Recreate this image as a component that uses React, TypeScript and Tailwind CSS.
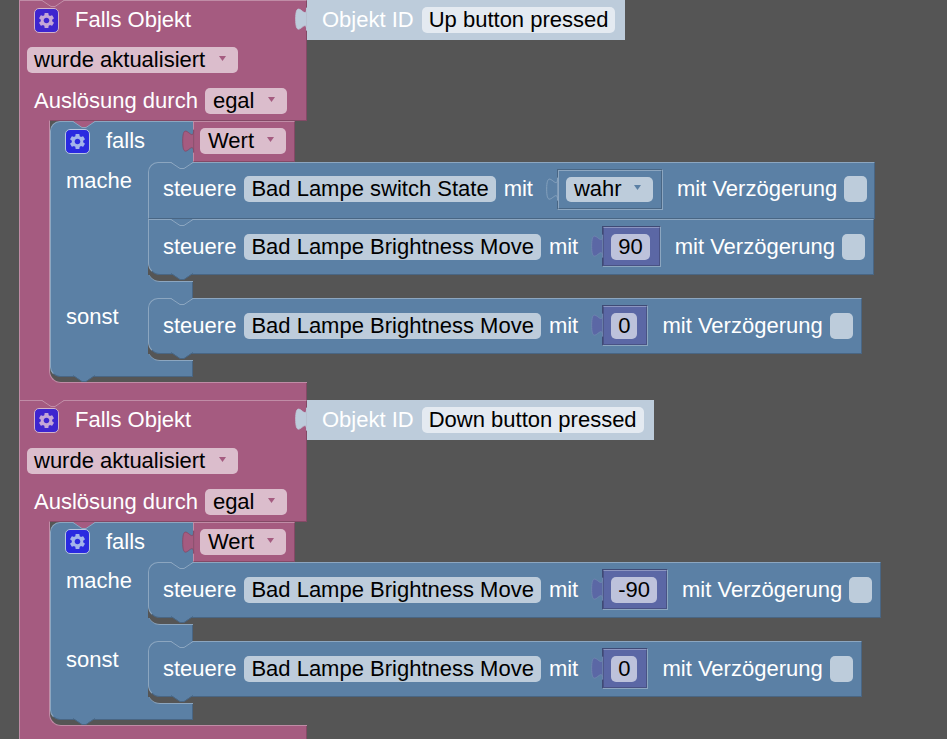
import { MdSettings } from "react-icons/md";

const PINK = "#a55b80";
const BLUE = "#5b80a5";

type Tone = "pink" | "blue" | "idle" | "num";

const tabColors: Record<Tone, { fill: string; stroke: string }> = {
  pink: { fill: "#a55b80", stroke: "#844966" },
  blue: { fill: "#5b80a5", stroke: "#8ca6c0" },
  idle: { fill: "#bdccdb", stroke: "#bdccdb" },
  num: { fill: "#5b67a5", stroke: "#7288b0" },
};

// value connector on the left side of a block
function Tab({ tone }: { tone: Tone }) {
  const c = tabColors[tone];
  return (
    <svg
      width="13"
      height="25"
      viewBox="-8.5 -0.5 9.5 16.5"
      preserveAspectRatio="none"
      className="absolute left-[-12px] top-[7px]"
    >
      <path
        d="M0 0 c0 10 -8 -8 -8 7.5 s8 -2.5 8 7.5 z"
        fill={c.fill}
        stroke={c.stroke}
        strokeWidth="0.6"
      />
    </svg>
  );
}

// the dent at the top edge of a statement block
function TopNotch({ fill, stroke, left }: { fill: string; stroke: string; left: string }) {
  return (
    <svg width="24" height="8" viewBox="0 0 24 8" className={`absolute top-[-1px] ${left}`}>
      <path d="M1 0 L10 6.5 H14 L23 0 Z" fill={fill} />
      <path d="M1 0.5 L10 6.5 H14 L23 0.5" fill="none" stroke={stroke} />
    </svg>
  );
}

// the bump at the bottom edge of a statement block
function BottomNotch({ left }: { left: string }) {
  return (
    <svg width="24" height="8" viewBox="0 0 24 8" className={`absolute top-full mt-[-1px] ${left}`}>
      <path d="M1 0 L10 6.5 H14 L23 0 Z" fill={BLUE} />
      <path d="M1 0.5 L10 6.5 H14 L23 0.5" fill="none" stroke="#496684" />
    </svg>
  );
}

function Arrow({ color }: { color: string }) {
  return (
    <svg width="7" height="5" viewBox="0 0 7 5" className="ml-[11px] mr-[2px] mb-[3px]">
      <path d="M0 0 H7 L3.5 5 Z" fill={color} />
    </svg>
  );
}

function Gear({ bg, color }: { bg: string; color: string }) {
  return (
    <div className={`flex h-[25px] w-[25px] items-center justify-center rounded-[5px] border ${bg}`}>
      <MdSettings className={color} size={19} />
    </div>
  );
}

function Dropdown({ label, className }: { label: string; className: string }) {
  return (
    <div className={`flex h-[26px] items-center justify-between rounded-[5px] bg-[#dbbdcc] pr-[10px] text-black ${className}`}>
      <span>{label}</span>
      <Arrow color={PINK} />
    </div>
  );
}

function Field({ label, bg = "bg-[#bdccdb]" }: { label: string; bg?: string }) {
  return (
    <div className={`flex h-[26px] items-center rounded-[5px] px-[7px] text-black ${bg}`}>{label}</div>
  );
}

function BoolValue() {
  return (
    <div className="relative ml-[24px] border border-t-[#496684] border-l-[#496684] border-r-[#8ca6c0] border-b-[#8ca6c0]">
      <Tab tone="blue" />
      <div className="flex h-[39px] w-[104px] items-center border border-t-[#8ca6c0] border-l-[#8ca6c0] border-r-[#496684] border-b-[#496684] bg-[#5b80a5] pl-[7px]">
        <div className="flex h-[25px] w-[87px] items-center justify-between rounded-[5px] bg-[#bdccdb] pl-[8px] pr-[10px] text-black">
          <span>wahr</span>
          <Arrow color="#5b80a5" />
        </div>
      </div>
    </div>
  );
}

function NumValue({ value }: { value: string }) {
  return (
    <div className="relative ml-[24px] border border-t-[#3f4a75] border-l-[#3f4a75] border-r-[#8ca6c0] border-b-[#8ca6c0]">
      <Tab tone="num" />
      <div className="flex h-[39px] items-center border border-t-[#8c95c0] border-l-[#495284] border-r-[#495284] border-b-[#495284] bg-[#5b67a5] pl-[7px] pr-[9px]">
        <Field label={value} bg="bg-[#bdc2db]" />
      </div>
    </div>
  );
}

interface StatementProps {
  name: string;
  value: string;
  first?: boolean;
  last?: boolean;
  height: string;
}

function Statement({ name, value, first, last, height }: StatementProps) {
  return (
    <div
      className={`relative flex items-center border border-t-[#8ca6c0] border-l-[#8ca6c0] border-r-[#496684] border-b-[#496684] bg-[#5b80a5] pl-[14px] text-white ${value === "wahr" ? "pr-[7px]" : "pr-[8px]"} ${height} ${first ? "rounded-tl-[10px]" : ""} ${last ? "rounded-bl-[12px]" : ""}`}
    >
      <TopNotch fill={BLUE} stroke="#8ca6c0" left="left-[21px]" />
      <span>steuere</span>
      <div className="ml-[8px]">
        <Field label={name} />
      </div>
      <span className="ml-[8px]">mit</span>
      {value === "wahr" ? <BoolValue /> : <NumValue value={value} />}
      <span className="ml-[14px]">mit Verzögerung</span>
      <div className="ml-[7px] h-[26px] w-[23px] rounded-[5px] bg-[#bdccdb]" />
      {last && <BottomNotch left="left-[21px]" />}
    </div>
  );
}

interface BranchProps {
  label: string;
  rows: { name: string; value: string }[];
}

function Branch({ label, rows }: BranchProps) {
  return (
    <div className="flex w-[143px] bg-[#5b80a5]">
      <div className="w-[98px] shrink-0 border-l border-[#8ca6c0] pl-[15px] pt-[8px] text-white">{label}</div>
      {/* narrow on purpose: only the gap under the stack gets an edge, the rows overflow to the right */}
      <div className="w-[45px] shrink-0 rounded-bl-[12px] border-b border-[#8ca6c0] bg-[#555555] pb-[6px]">
        <div className="flex w-max flex-col items-start bg-[linear-gradient(#5b80a5_50%,#555555_50%)]">
          {rows.map((r, i) => (
            <Statement
              key={i}
              name={r.name}
              value={r.value}
              first={i === 0}
              last={i === rows.length - 1}
              height={rows.length > 1 && i === 0 ? "h-[57px] pb-[3px]" : "h-[56px] pb-[1px]"}
            />
          ))}
        </div>
      </div>
    </div>
  );
}

interface HatProps {
  objectId: string;
  shifted?: boolean;
  thenRows: { name: string; value: string }[];
  elseRows: { name: string; value: string }[];
}

function HatBlock({ objectId, shifted, thenRows, elseRows }: HatProps) {
  return (
    <div className="w-max">
      <div className="flex items-start">
        {/* Falls Objekt */}
        <div className={`relative w-[288px] border-l border-r border-t border-t-[#c08ca6] border-l-[#c08ca6] border-r-[#844966] bg-[#a55b80] text-white ${shifted ? "h-[121px]" : "h-[120px]"}`}>
          <TopNotch fill={PINK} stroke="#c08ca6" left="left-[21px]" />
          <div className="flex h-[38px] items-center pl-[14px]">
            <Gear bg="border-[#d3b3c8] bg-[#3d25cf]" color="text-[#c3a6d6]" />
            <span className="ml-[16px]">Falls Objekt</span>
          </div>
          <div className={`pl-[7px] ${shifted ? "mt-[9px]" : "mt-[8px]"}`}>
            <Dropdown label="wurde aktualisiert" className="w-[211px] pl-[7px]" />
          </div>
          <div className="mt-[15px] flex items-center pl-[14px]">
            <span>Auslösung durch</span>
            <div className="ml-[7px]">
              <Dropdown label="egal" className="w-[82px] pl-[8px]" />
            </div>
          </div>
        </div>
        {/* Objekt ID */}
        <div className="relative flex h-[40px] items-center bg-[#bdccdb] pb-[1px] pl-[15px] pr-[10px] text-white">
          <Tab tone="idle" />
          <span>Objekt ID</span>
          <div className="ml-[8px]">
            <Field label={objectId} bg="bg-[#e4eaf1]" />
          </div>
        </div>
      </div>

      <div className="flex w-[288px] bg-[#a55b80]">
        <div className="w-[30px] shrink-0 border-l border-[#c08ca6]" />
        <div className="w-[258px] shrink-0 rounded-bl-[12px] border-b border-l border-t border-b-[#c08ca6] border-l-[#c08ca6] border-t-[#844966] bg-[#555555] pb-[5px]">
          <div className="w-max">
            {/* falls + Wert */}
            <div className="flex items-start">
              <div className={`relative flex w-[143px] items-center rounded-tl-[10px] border-l border-t border-[#8ca6c0] bg-[#5b80a5] pb-[2px] pl-[14px] text-white ${shifted ? "h-[40px]" : "h-[41px]"}`}>
                <TopNotch fill={PINK} stroke="#8ca6c0" left="left-[21px]" />
                <Gear bg="border-[#b7c6e0] bg-[#2a2ae0]" color="text-[#a3b4ea]" />
                <span className="ml-[16px]">falls</span>
              </div>
              <div className={`relative flex w-[102px] items-center border border-t-[#c08ca6] border-l-[#c08ca6] border-r-[#844966] border-b-[#844966] bg-[#a55b80] pl-[6px] ${shifted ? "h-[40px] pb-[1px]" : "h-[41px] pb-[2px]"}`}>
                <Tab tone="pink" />
                <Dropdown label="Wert" className="w-[86px] pl-[8px]" />
              </div>
            </div>
            <Branch label="mache" rows={thenRows} />
            <div className="h-[16px] w-[143px] border-l border-r border-l-[#8ca6c0] border-r-[#496684] bg-[#5b80a5]" />
            <Branch label="sonst" rows={elseRows} />
            <div className="relative h-[16px] w-[143px] rounded-bl-[10px] border-b border-l border-r border-b-[#496684] border-l-[#8ca6c0] border-r-[#496684] bg-[#5b80a5]">
              <BottomNotch left="left-[21px]" />
            </div>
          </div>
        </div>
      </div>
      <div className="h-[17px] w-[288px] border-l border-r border-l-[#c08ca6] border-r-[#844966] bg-[#a55b80]" />
    </div>
  );
}

const MOVE = "Bad Lampe Brightness Move";

export default function App() {
  return (
    <div
      className="h-[739px] overflow-hidden bg-[#555555] pl-[19px] text-[22px] leading-none"
      style={{ fontFamily: '"Liberation Sans", Arial, sans-serif' }}
    >
      <HatBlock
        objectId="Up button pressed"
        thenRows={[
          { name: "Bad Lampe switch State", value: "wahr" },
          { name: MOVE, value: "90" },
        ]}
        elseRows={[{ name: MOVE, value: "0" }]}
      />
      <HatBlock
        objectId="Down button pressed"
        shifted
        thenRows={[{ name: MOVE, value: "-90" }]}
        elseRows={[{ name: MOVE, value: "0" }]}
      />
    </div>
  );
}
